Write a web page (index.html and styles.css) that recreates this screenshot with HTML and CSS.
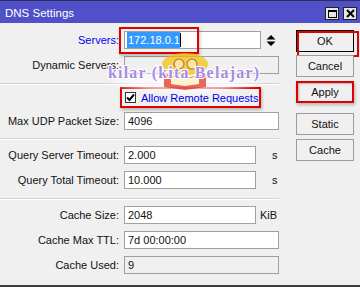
FILE: index.html
```html
<!DOCTYPE html>
<html>
<head>
<meta charset="utf-8">
<link rel="stylesheet" href="styles.css">
</head>
<body>
<div class="window">
  <div class="titlebar">
    <span class="title">DNS Settings</span>
    <div class="tb-btns">
      <span class="tb-btn"><span class="max-ico"></span></span>
      <span class="tb-btn"><svg width="9" height="9" viewBox="0 0 9 9"><path d="M1 1 L8 8 M8 1 L1 8" stroke="#000" stroke-width="2"/></svg></span>
    </div>
  </div>
  <div class="content">
    <div class="form">
      <div class="row">
        <span class="lbl blue">Servers:</span>
        <div class="field w-srv"><span class="sel">172.18.0.1</span><span class="caret"></span></div>
        <svg class="spin" width="10" height="11" viewBox="0 0 10 11"><path d="M5 0 L9.5 4.5 H0.5 Z M0.5 6.5 H9.5 L5 11 Z" fill="#000"/></svg>
      </div>
      <div class="row">
        <span class="lbl">Dynamic Servers:</span>
        <div class="field w-full disabled"></div>
      </div>
      <div class="sep mt9"></div>
      <div class="check-row mt2">
        <div class="check-wrap">
          <span class="checkbox"><svg width="9" height="9" viewBox="0 0 9 9"><path d="M1 4.5 L3.5 7 L8 1.5" stroke="#000" stroke-width="2" fill="none"/></svg></span>
          <span class="blue">Allow Remote Requests</span>
        </div>
      </div>
      <div class="row mt4">
        <span class="lbl">Max UDP Packet Size:</span>
        <div class="field w-full">4096</div>
      </div>
      <div class="sep mt8"></div>
      <div class="row mt6">
        <span class="lbl">Query Server Timeout:</span>
        <div class="field w-short">2.000</div>
        <span class="unit">s</span>
      </div>
      <div class="row">
        <span class="lbl">Query Total Timeout:</span>
        <div class="field w-short">10.000</div>
        <span class="unit">s</span>
      </div>
      <div class="sep mt9"></div>
      <div class="row mt6">
        <span class="lbl">Cache Size:</span>
        <div class="field w-short">2048</div>
        <span class="unit unit-kib">KiB</span>
      </div>
      <div class="row">
        <span class="lbl">Cache Max TTL:</span>
        <div class="field w-full">7d 00:00:00</div>
      </div>
      <div class="row">
        <span class="lbl">Cache Used:</span>
        <div class="field w-full disabled">9</div>
      </div>
    </div>
    <div class="buttons">
      <div class="btn btn-ok">OK</div>
      <div class="btn mt3">Cancel</div>
      <div class="btn btn-apply mt4">Apply</div>
      <div class="btn mt10">Static</div>
      <div class="btn mt4">Cache</div>
    </div>
  </div>
  <div class="mark-servers"></div>
  <svg class="watermark" width="180" height="60" viewBox="0 0 180 60">
    <defs>
      <radialGradient id="halo" cx="50%" cy="50%" r="50%">
        <stop offset="0%" stop-color="#ffffff" stop-opacity="0.85"/>
        <stop offset="65%" stop-color="#ffffff" stop-opacity="0.6"/>
        <stop offset="100%" stop-color="#ffffff" stop-opacity="0"/>
      </radialGradient>
    </defs>
    <ellipse cx="85" cy="37" rx="80" ry="13" fill="url(#halo)"/>
    <g opacity="0.7">
      <ellipse cx="85" cy="19" rx="23" ry="11" fill="#f5c000"/>
      <circle cx="79" cy="19" r="5" fill="#ffe27a" stroke="#c05a00" stroke-width="1.5"/>
      <circle cx="92" cy="19" r="5" fill="#ffe27a" stroke="#c05a00" stroke-width="1.5"/>
      <path d="M64 29 L85 33 L106 29 L106 42 L85 45 L64 42 Z" fill="#e02a18"/>
      <path d="M71 31 L85 34 L99 31 L99 39 L85 41 L71 39 Z" fill="#fff0c0"/>
    </g>
    <text x="8" y="33" textLength="151" lengthAdjust="spacing" class="wm-text">kilar (kita Belajar)</text>
  </svg>
</div>
</body>
</html>
```
FILE: styles.css
```css
* { box-sizing: border-box; }
html, body { margin: 0; padding: 0; }
body {
  width: 360px;
  height: 287px;
  overflow: hidden;
  background: #f0f0f0;
  font-family: "Liberation Sans", Arial, sans-serif;
  font-size: 11px;
  color: #111;
}
.window {
  position: relative;
  height: 287px;
  display: flex;
  flex-direction: column;
  border-bottom: 2px solid #3a3a3a;
}
.titlebar {
  height: 23px;
  flex: none;
  background: #5050c8;
  border-top: 1px solid #2e2e5e;
  display: flex;
  align-items: center;
  padding: 0 3px 0 5px;
  color: #fff;
}
.title { flex: 1; font-size: 11.5px; padding-top: 2px; }
.tb-btns { display: flex; gap: 4px; margin-top: 3px; }
.tb-btn {
  width: 14px;
  height: 13px;
  background: #e6e6e6;
  border: 1px solid #222;
  display: flex;
  align-items: center;
  justify-content: center;
}
.max-ico { width: 9px; height: 8px; border: 1px solid #000; border-top-width: 2px; }
.content { flex: 1; display: flex; padding: 7px 6px 0 0; gap: 17px; }
.form { width: 279px; margin-top: 1px; display: flex; flex-direction: column; }
.row { display: flex; align-items: center; height: 18px; flex: none; }
.row + .row { margin-top: 7px; }
.lbl { width: 119px; text-align: right; margin-right: 5px; white-space: nowrap; }
.blue { color: #0000f0; }
.field {
  height: 18px;
  border: 1px solid #a0a0a0;
  background: #fff;
  padding-left: 3px;
  display: flex;
  align-items: center;
  white-space: nowrap;
}
.w-full { width: 155px; }
.w-short { width: 132px; }
.w-srv { width: 137px; padding-left: 2px; }
.disabled { background: #f0f0f0; }
.sel { background: #3399ff; color: #fff; height: 16px; line-height: 16px; padding-left: 1px; }
.caret { width: 1px; height: 14px; background: #000; }
.unit { margin-left: 16px; }
.unit-kib { margin-left: 4px; }
.spin { margin-left: 5px; }
.sep { height: 2px; flex: none; border-top: 1px solid #d2d2d2; border-bottom: 1px solid #fff; }
.check-row { height: 21px; flex: none; display: flex; padding-left: 120px; }
.check-wrap {
  display: flex;
  align-items: center;
  gap: 5px;
  height: 21px;
  padding: 0 1px 0 3px;
  border: 2px solid #e00000;
  box-shadow: 1px 2px 3px rgba(0, 0, 0, 0.25);
}
.checkbox {
  width: 11px;
  height: 11px;
  border: 1px solid #333;
  background: #fff;
  display: flex;
  align-items: center;
  justify-content: center;
}
.mt2 { margin-top: 2px; }
.mt3 { margin-top: 3px; }
.mt4 { margin-top: 4px; }
.mt6 { margin-top: 6px !important; }
.mt8 { margin-top: 8px; }
.mt9 { margin-top: 9px; }
.mt10 { margin-top: 10px; }
.buttons { width: 58px; display: flex; flex-direction: column; }
.btn {
  height: 22px;
  border: 1px solid #9a9a9a;
  background: #f0f0f0;
  display: flex;
  align-items: center;
  justify-content: center;
  color: #111;
  position: relative;
}
.btn-ok { border-color: #000; }
.btn-ok::after {
  content: "";
  position: absolute;
  left: 0;
  top: 0;
  width: 58px;
  height: 22px;
  border: 2px solid #e00000;
}
.btn-apply {
  border: 2px solid #e00000;
  box-shadow: inset 1px 1px 2px rgba(0, 0, 0, 0.25), 1px 2px 3px rgba(0, 0, 0, 0.25);
}
.mark-servers {
  position: absolute;
  left: 119px;
  top: 27px;
  width: 80px;
  height: 27px;
  border: 2px solid #e00000;
  box-shadow: 1px 2px 3px rgba(0, 0, 0, 0.25);
}
.watermark { position: absolute; left: 100px; top: 45px; }
.wm-text {
  font-family: "Liberation Serif", serif;
  font-weight: bold;
  font-size: 16px;
  fill: #a98ae0;
  stroke: #ffffff;
  stroke-width: 2px;
  paint-order: stroke;
}
```
